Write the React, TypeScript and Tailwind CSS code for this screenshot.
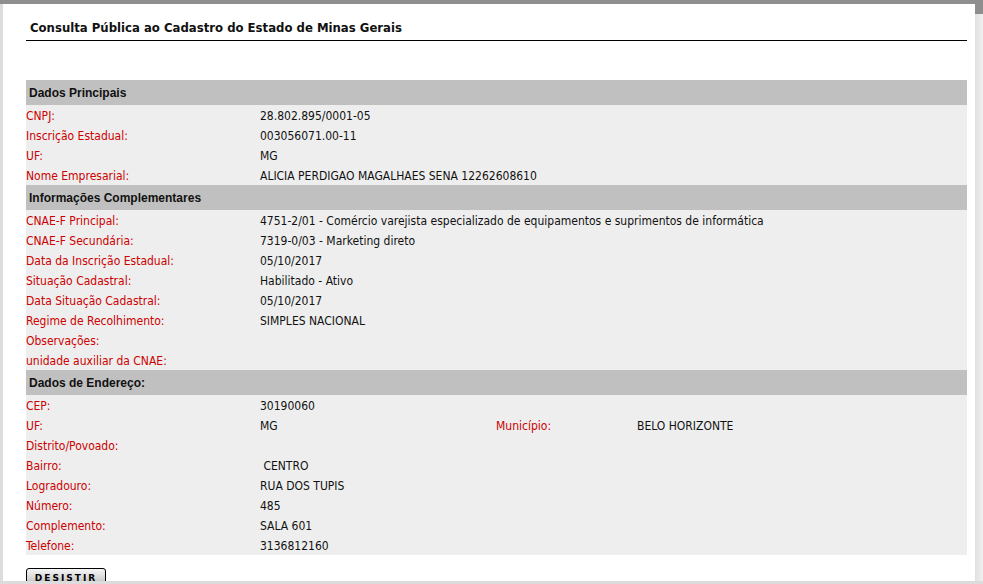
import React from 'react';

type Row = {
    label: string
    value?: string
    extraLabel?: string
    extraValue?: string
}

interface SectionProps {
    title: string
    rows: Row[]
}

const principais: Row[] = [
    {label: 'CNPJ:', value: '28.802.895/0001-05'},
    {label: 'Inscrição Estadual:', value: '003056071.00-11'},
    {label: 'UF:', value: 'MG'},
    {label: 'Nome Empresarial:', value: 'ALICIA PERDIGAO MAGALHAES SENA 12262608610'},
];

const complementares: Row[] = [
    {label: 'CNAE-F Principal:', value: '4751-2/01 - Comércio varejista especializado de equipamentos e suprimentos de informática'},
    {label: 'CNAE-F Secundária:', value: '7319-0/03 - Marketing direto'},
    {label: 'Data da Inscrição Estadual:', value: '05/10/2017'},
    {label: 'Situação Cadastral:', value: 'Habilitado - Ativo'},
    {label: 'Data Situação Cadastral:', value: '05/10/2017'},
    {label: 'Regime de Recolhimento:', value: 'SIMPLES NACIONAL'},
    {label: 'Observações:'},
    {label: 'unidade auxiliar da CNAE:'},
];

const endereco: Row[] = [
    {label: 'CEP:', value: '30190060'},
    {label: 'UF:', value: 'MG', extraLabel: 'Município:', extraValue: 'BELO HORIZONTE'},
    {label: 'Distrito/Povoado:'},
    {label: 'Bairro:', value: '\u00a0CENTRO'},
    {label: 'Logradouro:', value: 'RUA DOS TUPIS'},
    {label: 'Número:', value: '485'},
    {label: 'Complemento:', value: 'SALA 601'},
    {label: 'Telefone:', value: '3136812160'},
];

const bodyFont = 'font-["DejaVu_Sans_Condensed","DejaVu_Sans",sans-serif] [font-stretch:condensed]';

const Section = ({title, rows}: SectionProps) => {
    return (
        <div>
            <div className="h-[25px] bg-[#c0c0c0] flex items-center pl-[3px] pt-[1px] font-['Liberation_Sans',Arial,sans-serif] text-[12px] font-bold text-[#111]" >
                {title}
            </div >
            <div className="bg-[#eeeeee]" >
                {rows.map((row) => (
                    <div key={row.label} className={`h-[20px] flex items-center pt-[2px] text-[12px] leading-[14px] ${bodyFont}`} >
                        <div className="w-[234px] shrink-0 text-[#cc0000]" >{row.label}</div >
                        <div className={row.extraLabel ? 'w-[236px] shrink-0 text-[#111]' : 'text-[#111]'} >
                            {row.value}
                        </div >
                        {row.extraLabel && (
                            <>
                                <div className="w-[141px] shrink-0 text-[#cc0000]" >{row.extraLabel}</div >
                                <div className="text-[#111]" >{row.extraValue}</div >
                            </>
                        )}
                    </div >
                ))}
            </div >
        </div >
    )
};

const App = () => {
    return (
        <div className="w-[983px] h-[584px] overflow-hidden bg-[#dcdcdc] flex flex-col" >
            <div className="h-[4px] bg-[#8e8e8e] shrink-0" />
            <div className="flex flex-1 min-h-0" >
                <div className="w-[3px] bg-[#dcdcdc] shrink-0" />
                <div className="w-[972px] bg-white pl-[23px] pr-[8px] overflow-hidden" >
                    <div className={`h-[37px] border-b border-black flex items-end pb-[3px] pl-[4px] text-[13px] font-bold text-[#111] ${bodyFont}`} >
                        Consulta Pública ao Cadastro do Estado de Minas Gerais
                    </div >
                    <div className="mt-[39px]" >
                        <Section title="Dados Principais" rows={principais} />
                        <Section title="Informações Complementares" rows={complementares} />
                        <Section title="Dados de Endereço:" rows={endereco} />
                    </div >
                    <div className="mt-[13px] flex" >
                        <button
                            className="w-[80px] h-[22px] border border-black rounded-t-[3px] bg-gradient-to-b from-[#f6f6f6] via-[#d4d4d4] to-[#9c9c9c] flex justify-center pt-[4px] text-[9px] leading-[10px] font-bold tracking-[2px] text-black font-['DejaVu_Sans',sans-serif]" >
                            DESISTIR
                        </button >
                    </div >
                </div >
                <div className="flex-1 flex flex-col" >
                    <div className="h-[10px] bg-[#8e8e8e]" />
                    <div className="flex-1 bg-gradient-to-r from-[#e0e0e0] to-[#f0f0f0]" />
                </div >
            </div >
            <div className="h-[3px] bg-[#dcdcdc] shrink-0" />
        </div >
    )
};

export default App;
